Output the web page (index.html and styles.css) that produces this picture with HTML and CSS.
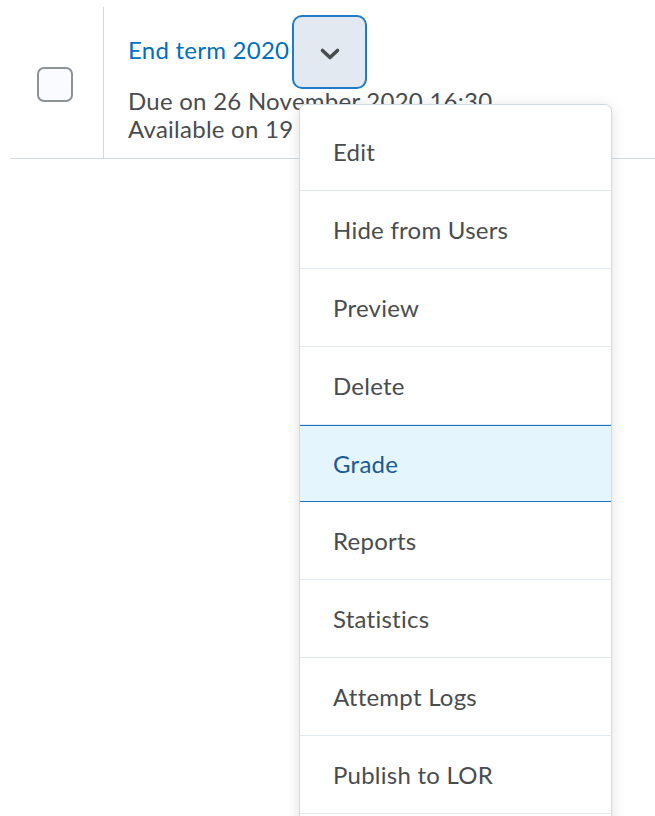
FILE: index.html
```html
<!DOCTYPE html>
<html lang="en">
<head>
<meta charset="utf-8">
<title>Quizzes</title>
<link rel="stylesheet" href="styles.css">
</head>
<body>
  <div class="list">
    <div class="row">
      <div class="select-cell">
        <span class="checkbox" role="checkbox" aria-checked="false"></span>
      </div>
      <div class="content">
        <div class="title-line">
          <a class="title" href="#">End term 2020</a>
          <button class="context-btn" type="button" aria-label="Actions for End term 2020">
            <svg width="22" height="14" viewBox="0 0 22 14" aria-hidden="true">
              <path d="M3.5 3.5 L11 10.5 L18.5 3.5" fill="none" stroke="#494c4e" stroke-width="3.6" stroke-linecap="round" stroke-linejoin="round"/>
            </svg>
          </button>
        </div>
        <div class="meta">Due on 26 November 2020 16:30</div>
        <div class="meta">Available on 19 November 2020 09:00</div>
      </div>
    </div>
  </div>

  <ul class="menu" role="menu">
    <li class="menu-item" role="menuitem">Edit</li>
    <li class="menu-item" role="menuitem">Hide from Users</li>
    <li class="menu-item" role="menuitem">Preview</li>
    <li class="menu-item" role="menuitem">Delete</li>
    <li class="menu-item is-active" role="menuitem">Grade</li>
    <li class="menu-item" role="menuitem">Reports</li>
    <li class="menu-item" role="menuitem">Statistics</li>
    <li class="menu-item" role="menuitem">Attempt Logs</li>
    <li class="menu-item" role="menuitem">Publish to LOR</li>
  </ul>
</body>
</html>
```

FILE: styles.css
```css
html, body {
  margin: 0;
  padding: 0;
  background: #ffffff;
  font-family: Lato, "Open Sans", "Liberation Sans", sans-serif;
  color: #494c4e;
  overflow: hidden;
}

.list {
  padding-top: 7px;
  padding-left: 10px;
}

.row {
  display: flex;
  height: 151px;
  border-bottom: 1px solid #d3d9e3;
}

.select-cell {
  width: 94px;
  border-right: 1px solid #d3d9e3;
  box-sizing: border-box;
  padding: 60px 0 0 27px;
}

.checkbox {
  display: block;
  width: 36px;
  height: 35px;
  box-sizing: border-box;
  border: 2px solid #8d9295;
  border-radius: 7px;
  background: #f9fbff;
}

.content {
  padding: 8px 0 0 24px;
  font-size: 24px;
  letter-spacing: 0.25px;
}

.title-line {
  display: flex;
  align-items: center;
  height: 74px;
}

.title {
  color: #006fbf;
  text-decoration: none;
  padding-bottom: 5px;
}

.context-btn {
  width: 75px;
  height: 74px;
  margin-left: 3px;
  padding: 0;
  display: flex;
  align-items: center;
  justify-content: center;
  box-sizing: border-box;
  border: 2.5px solid #1f7bc8;
  border-radius: 10px;
  background: #e3e9f1;
}

.context-btn svg {
  margin-top: 4px;
}

.meta {
  line-height: 28px;
  white-space: nowrap;
}

.title-line + .meta {
  margin-top: -2px;
}

/* dropdown opened from the context button */
.menu {
  position: absolute;
  left: 299px;
  top: 104px;
  width: 313px;
  height: 740px;
  margin: 0;
  padding: 8px 0 0;
  list-style: none;
  box-sizing: border-box;
  background: #ffffff;
  border: 1px solid #d3d9e3;
  border-radius: 7px;
  box-shadow: 0 2px 14px rgba(0, 0, 0, 0.13);
}

.menu-item {
  height: 78px;
  box-sizing: border-box;
  display: flex;
  align-items: center;
  padding-left: 33px;
  border-bottom: 1px solid #e3e9f1;
  font-size: 24px;
  letter-spacing: 0.25px;
  color: #494c4e;
}

.menu-item.is-active {
  height: 77px;
  background: #e4f5fd;
  border-top: 1px solid #1a74c0;
  border-bottom: 1px solid #1a74c0;
  color: #1b5a94;
}
```
